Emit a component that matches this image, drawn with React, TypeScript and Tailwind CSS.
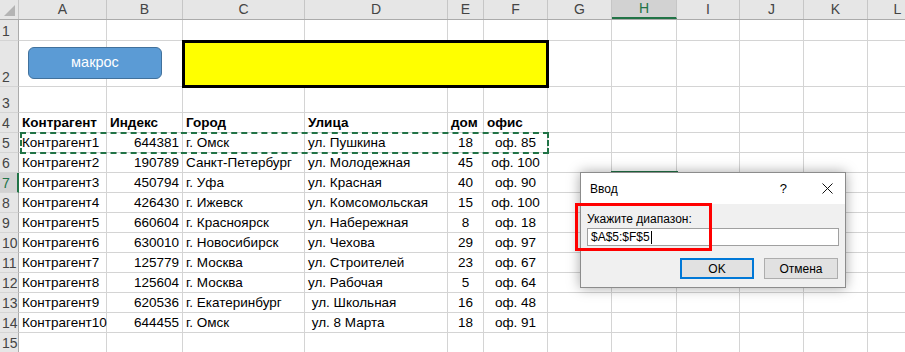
import React from "react";

const colWidths = [19, 88, 76, 122, 143, 36, 64, 64, 65, 63, 64, 64];
const letters = ["A", "B", "C", "D", "E", "F", "G", "H", "I", "J", "K", "L"];
const rowHeights = [21, 46, 26, 20, 20, 20, 20, 20, 20, 20, 20, 20, 20, 20, 20];

type Align = "l" | "r" | "c";

const rows: [string, string, string, string, string, string][] = [
  ["Контрагент1", "644381", "г. Омск", "ул. Пушкина", "18", "оф. 85"],
  ["Контрагент2", "190789", "Санкт-Петербург", "ул. Молодежная", "45", "оф. 100"],
  ["Контрагент3", "450794", "г. Уфа", "ул. Красная", "40", "оф. 90"],
  ["Контрагент4", "426430", "г. Ижевск", "ул. Комсомольская", "15", "оф. 100"],
  ["Контрагент5", "660604", "г. Красноярск", "ул. Набережная", "8", "оф. 18"],
  ["Контрагент6", "630010", "г. Новосибирск", "ул. Чехова", "29", "оф. 97"],
  ["Контрагент7", "125779", "г. Москва", "ул. Строителей", "23", "оф. 67"],
  ["Контрагент8", "125604", "г. Москва", "ул. Рабочая", "5", "оф. 64"],
  ["Контрагент9", "620536", "г. Екатеринбург", "\u00a0ул. Школьная", "16", "оф. 48"],
  ["Контрагент10", "644455", "г. Омск", "\u00a0ул. 8 Марта", "18", "оф. 91"],
];

const headerRow = ["Контрагент", "Индекс", "Город", "Улица", "дом", "офис"];
const dataAlign: Align[] = ["l", "r", "l", "l", "c", "c"];

function cellText(r: number, c: number): { text: string; align: Align; bold: boolean } {
  // r is 1-based row number, c is 0-based column (A = 0)
  if (c > 5) return { text: "", align: "l", bold: false };
  if (r === 4) return { text: headerRow[c], align: "l", bold: true };
  if (r >= 5 && r <= 14) return { text: rows[r - 5][c], align: dataAlign[c], bold: false };
  return { text: "", align: "l", bold: false };
}

function Cell({ r, c, h }: { r: number; c: number; h: number }) {
  const { text, align, bold } = cellText(r, c);
  const w = colWidths[c + 1];
  const justify =
    align === "r" ? "justify-end" : align === "c" ? "justify-center" : "justify-start";
  return (
    <div
      className={`flex shrink-0 items-end whitespace-pre border-b border-r border-[#d4d4d4] bg-white px-[3px] pb-[1px] text-[13.5px] leading-[16px] text-black ${justify} ${bold ? "font-bold" : ""}`}
      style={{ width: w, height: h }}
    >
      {text}
    </div>
  );
}

export default function App() {
  return (
    <div className="relative h-[352px] w-[905px] overflow-hidden bg-white font-['Liberation_Sans',Arial,sans-serif]">
      {/* column headers */}
      <div className="flex h-[20px] border-b border-[#ababab]">
        <div className="relative h-[19px] w-[19px] shrink-0 border-r border-[#c6c6c6] bg-[#e6e6e6]">
          <svg className="absolute bottom-[3px] right-[3px]" width="11" height="11" viewBox="0 0 11 11">
            <polygon points="11,0 11,11 0,11" fill="#b4b4b4" />
          </svg>
        </div>
        {letters.map((l, i) => {
          const sel = l === "H";
          return (
            <div
              key={l}
              className={`flex h-[19px] shrink-0 items-center justify-center border-r border-[#c6c6c6] text-[14px] ${sel ? "border-b-2 border-b-[#217346] bg-[#d2d2d2] text-[#217346]" : "bg-[#e6e6e6] text-[#444]"}`}
              style={{ width: i + 1 < colWidths.length ? colWidths[i + 1] : 60 }}
            >
              {l}
            </div>
          );
        })}
      </div>

      {/* rows */}
      {rowHeights.map((h, ri) => {
        const r = ri + 1;
        const sel = r === 7;
        return (
          <div key={r} className="flex">
            <div
              className={`flex w-[19px] shrink-0 items-end border-b border-[#d4d4d4] pb-[1px] pl-[2px] text-[14px] leading-[16px] ${sel ? "border-r-2 border-r-[#217346] bg-[#d2d2d2] text-[#217346]" : "border-r border-r-[#ababab] bg-[#e6e6e6] text-[#444]"}`}
              style={{ height: h }}
            >
              {r}
            </div>
            {Array.from({ length: 11 }).map((_, c) => (
              <Cell key={c} r={r} c={c} h={h} />
            ))}
            <div className="flex-1 border-b border-[#d4d4d4] bg-white" style={{ height: h }} />
          </div>
        );
      })}

      {/* macro button */}
      <div className="absolute left-[28px] top-[47px] flex h-[32px] w-[134px] items-center justify-center rounded-[6px] border border-[#41719c] bg-[#5b9bd5] text-[14.5px] text-white">
        макрос
      </div>

      {/* yellow shape */}
      <div className="absolute left-[182px] top-[40px] h-[48px] w-[367px] border-[3px] border-black bg-[#ffff00]" />

      {/* copy marquee */}
      <div className="absolute left-[20px] top-[132px] h-[22px] w-[529px] border-2 border-dashed border-[#217346]" />

      {/* active cell H7 */}
      <div className="absolute left-[611px] top-[171px] h-[23px] w-[67px] border-2 border-[#217346]" />

      {/* input dialog */}
      <div className="absolute left-[580px] top-[172px] flex h-[116px] w-[266px] flex-col border border-[#8c8c8c] shadow-[0_0_12px_rgba(0,0,0,0.35)]">
        <div className="flex h-[31px] items-center bg-white pl-[9px] pr-[12px] text-[12px] text-black">
          <span className="flex-1">Ввод</span>
          <span className="mr-[35px] text-[13px]">?</span>
          <svg width="11" height="11" viewBox="0 0 11 11">
            <path d="M0.5 0.5 L10.5 10.5 M10.5 0.5 L0.5 10.5" stroke="#111" strokeWidth="1" />
          </svg>
        </div>
        <div className="flex flex-1 flex-col bg-[#f0f0f0] px-[6px] pt-[7px]">
          <div className="text-[12px] leading-[16px] text-black">Укажите диапазон:</div>
          <div className="mt-[1px] flex h-[18px] items-center border border-[#a0a0a0] bg-white px-[3px] text-[12px] text-black">
            $A$5:$F$5
            <span className="ml-[1px] inline-block h-[13px] w-px bg-black" />
          </div>
          <div className="mt-[12px] flex justify-end gap-[10px] pr-[1px]">
            <div className="flex h-[21px] w-[74px] items-center justify-center border-2 border-[#0078d7] bg-[#e1e1e1] text-[12px] text-black">
              OK
            </div>
            <div className="flex h-[21px] w-[74px] items-center justify-center border border-[#adadad] bg-[#e1e1e1] text-[12px] text-black">
              Отмена
            </div>
          </div>
        </div>
      </div>

      {/* red highlight */}
      <div className="absolute left-[575px] top-[203px] h-[48px] w-[137px] border-[3px] border-[#ff0000]" />
    </div>
  );
}
